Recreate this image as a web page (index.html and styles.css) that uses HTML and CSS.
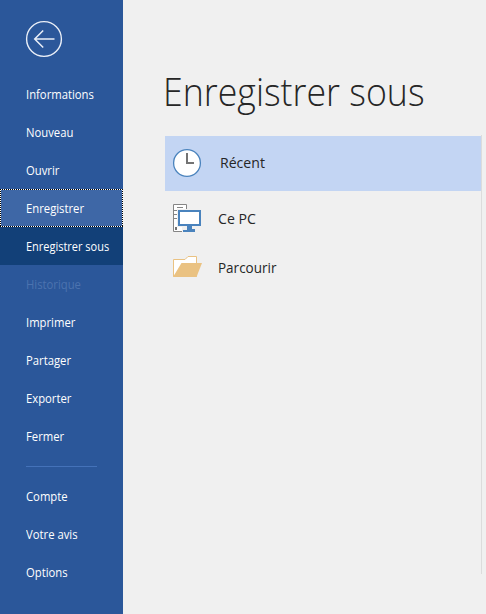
FILE: index.html
```html
<!DOCTYPE html>
<html lang="fr">
<head>
<meta charset="utf-8">
<title>Enregistrer sous</title>
<link rel="stylesheet" href="styles.css">
</head>
<body>
<div class="backstage">
  <nav class="sidebar">
    <a class="back" aria-label="Retour">
      <svg width="38" height="38" viewBox="0 0 38 38" fill="none" stroke="#e9eef7">
        <circle cx="19" cy="19" r="17.4" stroke-width="1.4"/>
        <path d="M29.5 19H10.5M18.2 10.5L9.7 19L18.2 27.5" stroke-width="1.5"/>
      </svg>
    </a>
    <a class="item"><span>Informations</span></a>
    <a class="item"><span>Nouveau</span></a>
    <a class="item"><span>Ouvrir</span></a>
    <a class="item focused"><span>Enregistrer</span></a>
    <a class="item selected"><span>Enregistrer sous</span></a>
    <a class="item disabled"><span>Historique</span></a>
    <a class="item"><span>Imprimer</span></a>
    <a class="item"><span>Partager</span></a>
    <a class="item"><span>Exporter</span></a>
    <a class="item"><span>Fermer</span></a>
    <div class="separator"></div>
    <a class="item"><span>Compte</span></a>
    <a class="item"><span>Votre avis</span></a>
    <a class="item"><span>Options</span></a>
  </nav>
  <main class="content">
    <h1><span>Enregistrer sous</span></h1>
    <div class="places">
      <div class="place recent">
        <svg width="30" height="30" viewBox="0 0 30 30" fill="none">
          <circle cx="15" cy="15" r="13.4" fill="#fff" stroke="#4a83bd" stroke-width="1.3"/>
          <path d="M15 5V15H22" stroke="#737373" stroke-width="2"/>
        </svg>
        <span>Récent</span>
      </div>
      <div class="place pc">
        <svg width="30" height="30" viewBox="0 0 30 30" fill="none">
          <path d="M1.5 1.5H14.5V28.5H1.5Z" fill="#fff" stroke="#858585"/>
          <path d="M5 4.5H11M2 7.5H5M2 11.5H5M2 15.5H5" stroke="#858585"/>
          <path d="M3 24H5V27H3Z" fill="#737373"/>
          <path d="M5 6H30V24H22V30H10V24H5Z" fill="#f0f0f0"/>
          <path d="M7 8H28V22H7Z" fill="#fff" stroke="#4a83bd" stroke-width="2"/>
          <path d="M15 23H20V26H23V29H11V27H15Z" fill="#4a83bd"/>
        </svg>
        <span>Ce PC</span>
      </div>
      <div class="place browse">
        <svg width="30" height="24" viewBox="0 0 30 24">
          <path d="M1.5 21.5V4.5H13L16 1.5H24.5V21.5Z" fill="#fff" stroke="#eac282"/>
          <path d="M1 22L9.5 8H30L24.5 22Z" fill="#eac282"/>
        </svg>
        <span>Parcourir</span>
      </div>
    </div>
  </main>
</div>
</body>
</html>
```
FILE: styles.css
```css
* { box-sizing: border-box; }
body {
  margin: 0;
  background: #f0f0f0;
  font-family: "Open Sans", "Noto Sans", sans-serif;
  color: #262626;
}
.backstage { display: flex; height: 614px; overflow: hidden; }
.sidebar {
  width: 123px;
  flex: none;
  background: #2b579a;
  color: #fff;
}
.back { display: block; height: 75px; padding: 20px 0 0 25px; }
.back svg { display: block; }
.back + .item { margin-top: 0; }
.item {
  display: flex;
  align-items: center;
  height: 38px;
  padding: 2px 0 0 26px;
  font-size: 12px;
  line-height: 16px;
  white-space: nowrap;
}
.item:not(.focused):not(.selected) { position: static; }
.item span { display: inline-block; transform-origin: 0 50%; transform: scaleX(.94); }
.focused {
  background:
    repeating-linear-gradient(90deg, #000 0 1px, #fff 1px 2px) 0 0 / 100% 1px no-repeat,
    repeating-linear-gradient(90deg, #000 0 1px, #fff 1px 2px) 0 100% / 100% 1px no-repeat,
    repeating-linear-gradient(#000 0 1px, #fff 1px 2px) 0 0 / 1px 100% no-repeat,
    repeating-linear-gradient(#000 0 1px, #fff 1px 2px) 100% 0 / 1px 100% no-repeat,
    #3e67a6;
}
.selected { background: #124078; }
.selected span { transform: scaleX(.915); }
.disabled { color: #4c73af; }
.separator { height: 1px; width: 71px; margin: 11px 0 10px 26px; background: #4472b9; }
.content { flex: 1; padding: 62px 4px 0 42px; }
h1 {
  margin: 0;
  height: 73px;
  font-size: 39px;
  line-height: 58px;
  font-weight: 300;
  white-space: nowrap;
}
h1 span { display: inline-block; margin-left: -2px; transform-origin: 0 50%; transform: scaleX(.916); }
.places { height: 439px; border-right: 1px solid #dcdcdc; padding-top: 1px; }
.place { display: flex; align-items: center; font-size: 15px; line-height: 20px; }
.place span { display: inline-block; transform-origin: 0 50%; transform: scaleX(.94); }
.recent { height: 55px; padding: 0 0 1px 7px; gap: 18px; background: #c3d5f3; }
.recent span { padding-bottom: 2px; }
.pc { height: 54px; padding-left: 7px; gap: 16px; }
.browse { height: 44px; padding-left: 7px; gap: 16px; }
.browse span { transform: scaleX(.9); }
```
